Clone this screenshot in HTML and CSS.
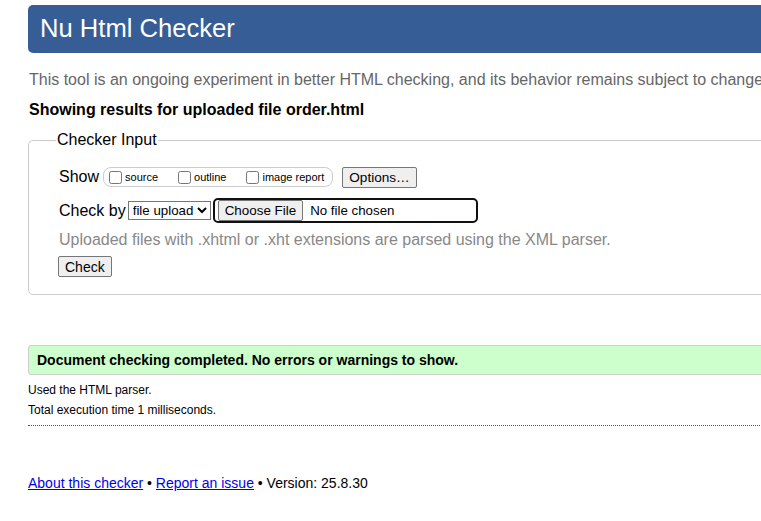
FILE: index.html
```html
<!DOCTYPE html>
<html lang="en">
<head>
<meta charset="utf-8">
<title>Showing results for uploaded file order.html - Nu Html Checker</title>
<link rel="stylesheet" href="styles.css">
</head>
<body>
<div class="page">
  <h1 class="banner">Nu Html Checker</h1>
  <p class="intro">This tool is an ongoing experiment in better HTML checking, and its behavior remains subject to change</p>
  <p class="showing">Showing results for uploaded file order.html</p>
  <form class="form">
    <fieldset class="input-set">
      <legend class="legend">Checker Input</legend>
      <div class="row show-row">
        <span class="row-label">Show</span>
        <fieldset class="show-box">
          <label class="opt"><input type="checkbox" class="cb">source</label>
          <label class="opt"><input type="checkbox" class="cb">outline</label>
          <label class="opt"><input type="checkbox" class="cb">image report</label>
        </fieldset>
        <button type="button" class="btn options">Options…</button>
      </div>
      <div class="row check-row">
        <span class="row-label by">Check by</span>
        <select class="sel"><option>file upload</option></select>
        <div class="file-wrap">
          <button type="button" class="btn choose">Choose File</button>
          <span class="nofile">No file chosen</span>
        </div>
      </div>
      <p class="hint">Uploaded files with .xhtml or .xht extensions are parsed using the XML parser.</p>
      <div class="row submit-row">
        <button type="button" class="btn check">Check</button>
      </div>
    </fieldset>
  </form>
  <p class="success">Document checking completed. No errors or warnings to show.</p>
  <p class="details first">Used the HTML parser.</p>
  <p class="details">Total execution time 1 milliseconds.</p>
  <hr class="sep">
  <p class="footer"><a href="#">About this checker</a> • <a href="#">Report an issue</a> • Version: 25.8.30</p>
</div>
</body>
</html>
```
FILE: styles.css
```css
html, body {
  margin: 0;
  padding: 0;
  background: #fff;
  color: #000;
  font-family: "Liberation Sans", Arial, sans-serif;
  overflow: hidden;
}
.page {
  width: 1100px;
  padding: 5px 0 0 28px;
}
.banner {
  margin: 0;
  background: #365d95;
  color: #fff;
  font-size: 25.6px;
  font-weight: normal;
  line-height: 29px;
  padding: 9px 12px 10px;
  border-radius: 5px;
}
.intro {
  margin: 16px 0 0 1px;
  color: #666;
  font-size: 16px;
  line-height: 22px;
}
.showing {
  margin: 9px 0 0 1px;
  font-size: 16px;
  font-weight: bold;
  line-height: 20px;
}
.form {
  margin: 11px 0 0;
}
.input-set {
  margin: 0;
  border: 1px solid #ccc;
  border-radius: 5px;
  padding: 17px 30px 17px 30px;
}
.legend {
  font-size: 16px;
  padding: 0 1px;
  margin-left: -3px;
}
.row {
  display: flex;
  align-items: center;
  font-size: 16px;
}
.row-label {
  margin-right: 3px;
}
.row-label.by {
  margin-right: 2px;
}
.show-row {
  height: 22px;
}
.show-box {
  display: flex;
  align-items: center;
  margin: 0 0 0 1px;
  padding: 0 5px 0 5px;
  border: 1px solid #ccc;
  border-radius: 8px;
  height: 18px;
  gap: 17px;
}
.opt {
  display: flex;
  align-items: center;
  font-size: 11px;
  margin-right: 3px;
}
.cb {
  margin: 0 3px 0 0;
  width: 13px;
  height: 13px;
}
.btn {
  font-family: "Liberation Sans", Arial, sans-serif;
  font-size: 14px;
  background: #efefef;
  border: 1px solid #767676;
  border-radius: 2px;
  padding: 1px 6px;
  color: #000;
  height: 21px;
}
.options {
  margin-left: 9px;
  font-size: 13.6px;
}
.check-row {
  margin-top: 10px;
  height: 25px;
}
.sel {
  font-family: "Liberation Sans", Arial, sans-serif;
  font-size: 13.3px;
  height: 19px;
  margin-right: 2px;
  border: 1px solid #767676;
  border-radius: 0;
  padding: 0;
  background: #fff;
}
.file-wrap {
  display: flex;
  align-items: center;
  width: 255px;
  height: 21px;
  border: 2px solid #101010;
  border-radius: 5px;
  padding: 0 3px;
}
.choose {
  font-size: 13.4px;
  margin-right: 7px;
}
.nofile {
  font-size: 13.3px;
}
.hint {
  margin: 7px 0 0;
  color: #888;
  font-size: 16px;
  line-height: 20px;
}
.submit-row {
  margin-top: 6px;
}
.check {
  margin-left: -1px;
}
.success {
  margin: 50px 0 0;
  background: #ccffcc;
  border: 1px solid #ccc;
  border-radius: 3px;
  padding: 6px 8px;
  font-size: 14px;
  font-weight: bold;
  line-height: 16px;
}
.details {
  margin: 7px 0 0;
  font-size: 12px;
  line-height: 13px;
}
.details.first {
  margin-top: 9px;
}
.sep {
  margin: 8px 0 0;
  border: 0;
  border-top: 1px dotted #555;
  height: 0;
}
.footer {
  margin: 49px 0 0;
  font-size: 14px;
}
.footer a {
  color: #0000ee;
}
```
